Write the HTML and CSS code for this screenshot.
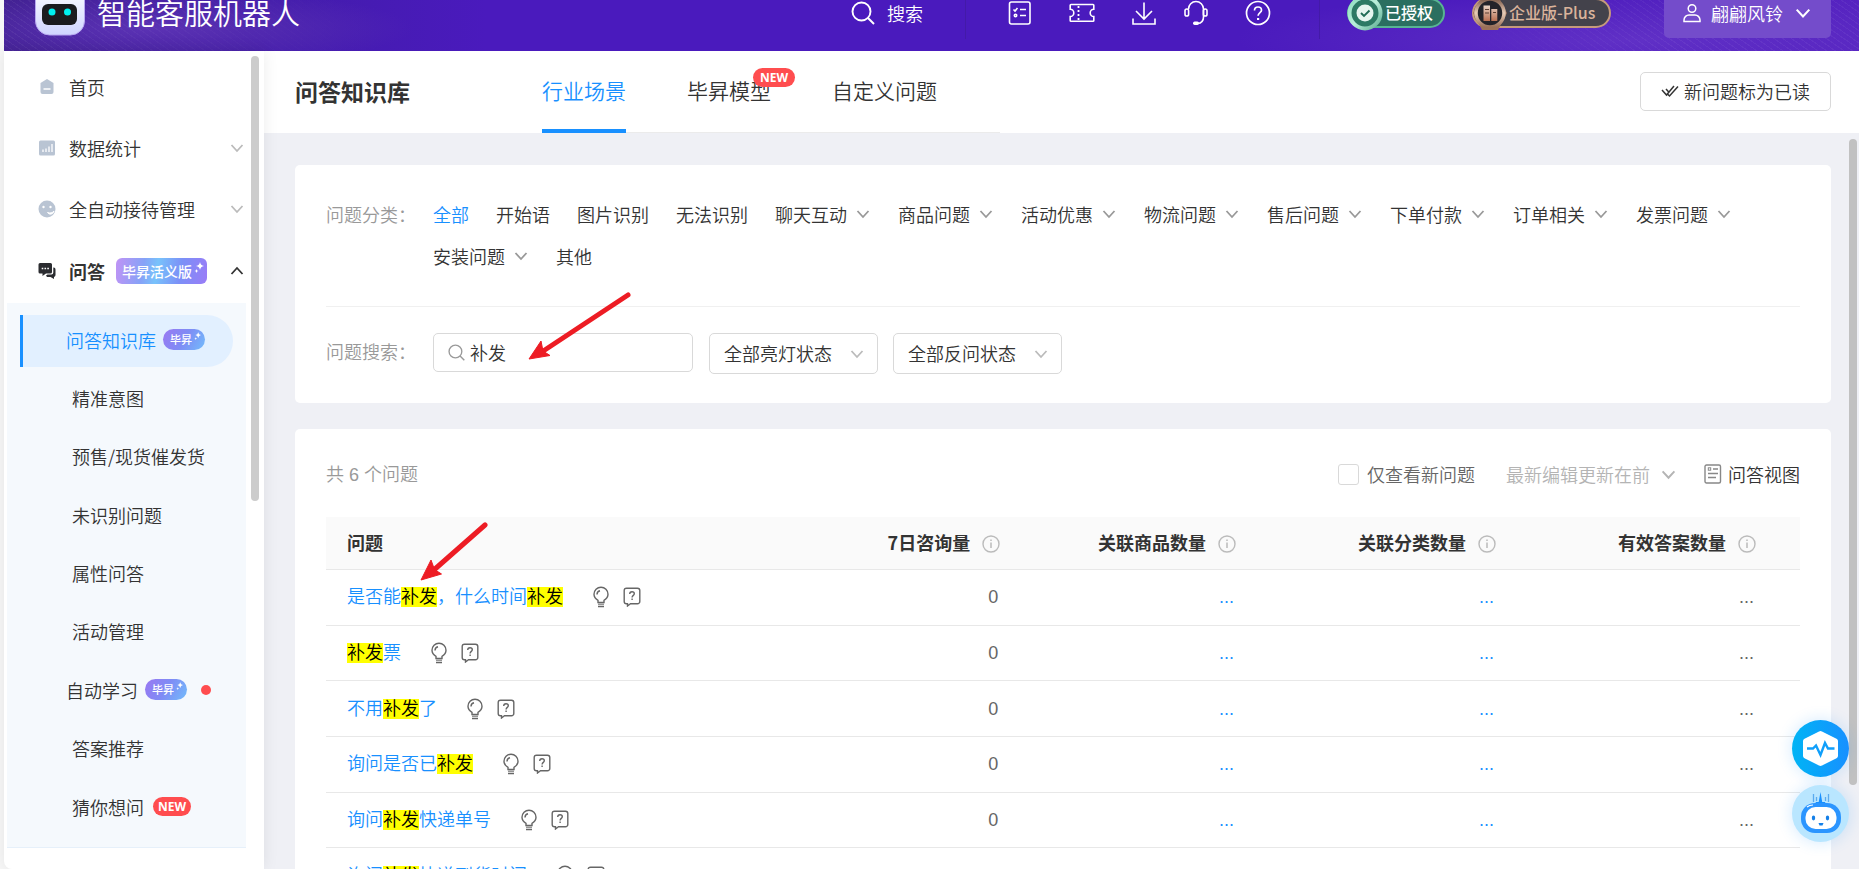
FILE: index.html
```html
<!DOCTYPE html>
<html lang="zh-CN">
<head>
<meta charset="utf-8">
<title>问答知识库</title>
<link rel="stylesheet" href="styles.css">
</head>
<body>
<svg class="defs" aria-hidden="true">
  <defs>
    <linearGradient id="g-logo" x1="0" y1="0" x2="0" y2="1"><stop offset="0" stop-color="#fff"/><stop offset="1" stop-color="#cfd4ff"/></linearGradient>
    <linearGradient id="g-ring" x1="0" y1="0" x2="1" y2="1"><stop offset="0" stop-color="#8fdcc0"/><stop offset=".5" stop-color="#b9efda"/><stop offset="1" stop-color="#5fae93"/></linearGradient>
    <linearGradient id="g-bronze" x1="0" y1="0" x2="0" y2="1"><stop offset="0" stop-color="#7d5a48"/><stop offset=".5" stop-color="#e8cdb8"/><stop offset="1" stop-color="#9a7058"/></linearGradient>
    <linearGradient id="g-build" x1="0" y1="0" x2="0" y2="1"><stop offset="0" stop-color="#e9d3c4"/><stop offset="1" stop-color="#b86f52"/></linearGradient>
    <symbol id="i-down" viewBox="0 0 14 14"><path d="M1.500 4l5.500 6 5.500-6" fill="none" stroke="currentColor" stroke-width="1.800"/></symbol>
    <symbol id="i-info" viewBox="0 0 18 18"><circle cx="9" cy="9" r="8" fill="none" stroke="currentColor" stroke-width="1.400"/><path d="M9 7.500v5.500M9 4.500v1.600" stroke="currentColor" stroke-width="1.500"/></symbol>
    <symbol id="i-bulb" viewBox="0 0 18 22"><path d="M6 16.500v-2.200C3.600 12.800 2 10.700 2 8.200a7 7 0 0 1 14 0c0 2.500-1.600 4.600-4 6.100v2.200zM5 8.500c0-2 1-3.300 3-3.800M6 20.500h6" fill="none" stroke="currentColor" stroke-width="1.400"/><path d="M6 18.200h6" stroke="currentColor" stroke-width="1"/></symbol>
    <symbol id="i-ask" viewBox="0 0 18 20"><path d="M3.500 1.200h11A2.300 2.300 0 0 1 16.800 3.500v11a2.300 2.300 0 0 1-2.300 2.300H7.500L4.500 19v-2.200h-1A2.300 2.300 0 0 1 1.200 14.500v-11A2.300 2.300 0 0 1 3.500 1.200z" fill="none" stroke="currentColor" stroke-width="1.400"/><path d="M6.700 7c0-1.500 1-2.300 2.300-2.300s2.300.8 2.300 2.100c0 1.500-2.200 1.700-2.200 3.700M9.100 11.600v1.500" fill="none" stroke="currentColor" stroke-width="1.400"/></symbol>
    <symbol id="i-find" viewBox="0 0 24 24"><circle cx="10.500" cy="10.500" r="9" fill="none" stroke="currentColor" stroke-width="1.900"/><path d="M17 17l6 6" stroke="currentColor" stroke-width="2"/></symbol>
    <symbol id="i-spark" viewBox="0 0 10 12"><path d="M6 0q.5 3.500 4 4-3.500.5-4 4-.5-3.500-4-4 3.500-.5 4-4zM2.500 7q.2 1.800 2 2-1.800.2-2 2-.2-1.800-2-2 1.800-.2 2-2z" fill="#fff"/></symbol>
  </defs>
</svg>

<div class="app">
<header class="topbar">
  <div class="brand">
    <svg width="50" height="50" viewBox="0 0 50 50" aria-hidden="true"><rect x=".5" y="-2" width="49" height="49" rx="14" fill="url(#g-logo)" stroke="#b8a8f0"/><rect x="7" y="16" width="35" height="21" rx="6" fill="#1b1b1f"/><circle cx="17" cy="24" r="3.500" fill="#00f0f0"/><circle cx="32.500" cy="24" r="3.500" fill="#00f0f0"/></svg>
    <span class="brand-name">智能客服机器人</span>
  </div>
  <div class="top-tools">
    <button class="top-search"><svg width="24" height="24" aria-hidden="true"><use href="#i-find"/></svg>搜索</button>
    <span class="top-line"></span>
    <div class="top-icons">
      <button aria-label="任务"><svg width="26" height="26" viewBox="0 0 26 26"><g fill="none" stroke="#fff" stroke-width="1.600"><rect x="2.500" y="2" width="20.500" height="22" rx="2"/><path d="M6.500 9.500l1.500 1.500 2.500-3M13 9.500h6M13 15.500h6"/><circle cx="8.500" cy="15.500" r="1.200"/></g></svg></button>
      <button aria-label="卡券"><svg width="26" height="26" viewBox="0 0 26 26"><path d="M2 4.500h22q.8 0 .8.800v4a3.600 3.600 0 0 0 0 7.200v4q0 .8-.8.800H2q-.8 0-.8-.8v-4a3.600 3.600 0 0 0 0-7.200v-4q0-.8.800-.8z" fill="none" stroke="#fff" stroke-width="1.600"/><path d="M9.500 6v14" stroke="#fff" stroke-width="1.800" stroke-dasharray="2 2"/></svg></button>
      <button aria-label="下载"><svg width="26" height="26" viewBox="0 0 26 26"><path d="M13 2.500v16M5 11l8 8 8-8M2 18.500v5.500h22v-5.500" fill="none" stroke="#fff" stroke-width="1.600"/></svg></button>
      <button class="tight" aria-label="客服"><svg width="26" height="26" viewBox="0 0 26 26"><g fill="none" stroke="#fff" stroke-width="1.600"><path d="M5.500 9a7.500 7.500 0 0 1 15 0v8q0 6-6 6.500"/><rect x="2" y="9" width="3.600" height="7" rx="1.800"/><rect x="20.400" y="9" width="3.600" height="7" rx="1.800"/></g><rect x="10" y="21.500" width="6" height="3.500" rx="1.700" fill="#fff"/></svg></button>
      <button aria-label="帮助"><svg width="26" height="26" viewBox="0 0 26 26"><circle cx="13" cy="13" r="11.500" fill="none" stroke="#fff" stroke-width="1.700"/><path d="M9.500 10.500c0-2.300 1.500-3.500 3.500-3.500s3.500 1.200 3.500 3.200c0 2.300-3.400 2.600-3.400 5.600" fill="none" stroke="#fff" stroke-width="1.700"/><path d="M12 18h2.200v2H12z" fill="#fff"/></svg></button>
    </div>
    <span class="top-line"></span>
    <div class="medal medal-green">
      <svg width="36" height="36" viewBox="0 0 36 36" aria-hidden="true"><circle cx="18" cy="18" r="15.500" fill="#2d7a64" stroke="url(#g-ring)" stroke-width="4"/><circle cx="18" cy="18" r="8.500" fill="#e6f5ef"/><path d="M14 18l3 3 5.500-5.500" fill="none" stroke="#1f6b55" stroke-width="1.900"/></svg>
      <span>已授权</span>
    </div>
    <div class="medal medal-bronze">
      <svg width="36" height="36" viewBox="0 0 36 36" aria-hidden="true"><path d="M10 1h16l9 17-9 17H10L1 18z" fill="#9b705a"/><circle cx="18" cy="18" r="14" fill="#242329" stroke="url(#g-bronze)" stroke-width="3.500"/><path d="M11.500 10.500h6.500V26h-6.500zM19.300 14h6V26h-6z" fill="url(#g-build)"/><path d="M13 14.500h4M13 18h4M21 17.500h3" stroke="#5c4034"/></svg>
      <span>企业版-Plus</span>
    </div>
    <button class="user"><svg width="20" height="20" viewBox="0 0 20 20" aria-hidden="true"><g fill="none" stroke="#fff" stroke-width="1.500"><circle cx="10" cy="5.500" r="3.800"/><path d="M2 18.500v-1.500c0-3 2.500-5 5-5h6c2.500 0 5 2 5 5v1.500z"/></g></svg>翩翩风铃<svg class="user-caret" width="16" height="16" aria-hidden="true"><use href="#i-down"/></svg></button>
  </div>
</header>

<div class="body">
<aside class="sidebar">
  <nav>
    <ul class="menu">
      <li><a class="menu-item" href="#"><svg width="18" height="18" viewBox="0 0 18 18"><path d="M9 1l6.500 4V14a2 2 0 0 1-2 2h-9a2 2 0 0 1-2-2V5z" fill="#b9c4d3"/><path d="M5.500 11h7" stroke="#fff" stroke-width="1.500"/></svg>首页</a></li>
      <li><a class="menu-item" href="#"><svg width="18" height="18" viewBox="0 0 18 18"><rect x="1" y="1.500" width="16" height="15" rx="1.500" fill="#b9c4d3"/><path d="M5 13v-2.500M8 13V9.500M11 13V7.500M14 13V5" stroke="#fff" stroke-width="1.300"/></svg>数据统计<svg class="caret" width="14" height="14"><use href="#i-down"/></svg></a></li>
      <li><a class="menu-item" href="#"><svg width="18" height="18" viewBox="0 0 18 18"><circle cx="9" cy="9" r="8.500" fill="#b9c4d3"/><circle cx="5.500" cy="7" r="1.200" fill="#fff"/><circle cx="12.500" cy="7" r="1.200" fill="#fff"/><path d="M9.500 12.500c2.500 1 5 .5 6.500-1.500-.5 3-4.500 4.500-6.500 1.500z" fill="#fff" stroke="#fff"/></svg>全自动接待管理<svg class="caret" width="14" height="14"><use href="#i-down"/></svg></a></li>
      <li><a class="menu-item current" href="#"><svg width="18" height="18" viewBox="0 0 18 18"><path d="M2 1h10.500a1.500 1.500 0 0 1 1.500 1.500V10a1.500 1.500 0 0 1-1.500 1.500H8L4.500 14v-2.500H2A1.500 1.500 0 0 1 .5 10V2.500A1.500 1.500 0 0 1 2 1z" fill="#2b2c30"/><path d="M15.300 5.500a2 2 0 0 1 2.200 2v5.500a2 2 0 0 1-1.500 1.900V17l-3.500-2H9l-1-1.500 1.500-1h4a2 2 0 0 0 1.800-2z" fill="#2b2c30"/><path d="M3.700 6.500h1.600M6.500 6.500h1.600M9.300 6.500h1.600" stroke="#fff" stroke-width="1.600"/></svg>问答<span class="pill pill-wide">毕昇活义版<svg width="10" height="12"><use href="#i-spark"/></svg></span><svg class="caret up" width="14" height="14"><use href="#i-down"/></svg></a>
        <ul class="submenu">
          <li><a class="sub tagged active" href="#">问答知识库<span class="pill">毕昇<svg width="7" height="9"><use href="#i-spark"/></svg></span></a></li>
          <li><a class="sub" href="#">精准意图</a></li>
          <li><a class="sub" href="#">预售/现货催发货</a></li>
          <li><a class="sub" href="#">未识别问题</a></li>
          <li><a class="sub" href="#">属性问答</a></li>
          <li><a class="sub" href="#">活动管理</a></li>
          <li><a class="sub tagged" href="#">自动学习<span class="pill">毕昇<svg width="7" height="9"><use href="#i-spark"/></svg></span><span class="dot"></span></a></li>
          <li><a class="sub" href="#">答案推荐</a></li>
          <li><a class="sub" href="#">猜你想问<span class="new">NEW</span></a></li>
        </ul>
      </li>
    </ul>
  </nav>
  <span class="thumb"></span>
</aside>

<main class="main">
  <div class="page-head">
    <h1>问答知识库</h1>
    <nav class="tabs">
      <a class="tab on" href="#">行业场景</a>
      <a class="tab" href="#">毕昇模型<span class="new new-tab">NEW</span></a>
      <a class="tab" href="#">自定义问题</a>
    </nav>
    <button class="read-btn"><svg width="18" height="14" viewBox="0 0 18 14" aria-hidden="true"><path d="M1 6l4.500 5L13 2M6.500 10l2 2L17 2.500M5 5l2.500 2.800" fill="none" stroke="#333" stroke-width="1.500"/></svg>新问题标为已读</button>
  </div>

  <div class="content">
    <section class="card filters">
      <div class="filter-row">
        <span class="label">问题分类：</span>
        <div class="cats">
          <a class="cat on" href="#">全部</a>
          <a class="cat" href="#">开始语</a>
          <a class="cat" href="#">图片识别</a>
          <a class="cat" href="#">无法识别</a>
          <a class="cat" href="#">聊天互动<svg width="16" height="14"><use href="#i-down"/></svg></a>
          <a class="cat" href="#">商品问题<svg width="16" height="14"><use href="#i-down"/></svg></a>
          <a class="cat" href="#">活动优惠<svg width="16" height="14"><use href="#i-down"/></svg></a>
          <a class="cat" href="#">物流问题<svg width="16" height="14"><use href="#i-down"/></svg></a>
          <a class="cat" href="#">售后问题<svg width="16" height="14"><use href="#i-down"/></svg></a>
          <a class="cat" href="#">下单付款<svg width="16" height="14"><use href="#i-down"/></svg></a>
          <a class="cat" href="#">订单相关<svg width="16" height="14"><use href="#i-down"/></svg></a>
          <a class="cat" href="#">发票问题<svg width="16" height="14"><use href="#i-down"/></svg></a>
          <a class="cat" href="#">安装问题<svg width="16" height="14"><use href="#i-down"/></svg></a>
          <a class="cat" href="#">其他</a>
        </div>
      </div>
      <div class="search-row">
        <label class="label" for="q">问题搜索：</label>
        <div class="search-box"><svg width="17" height="17" aria-hidden="true"><use href="#i-find"/></svg><input id="q" type="text" value="补发"></div>
        <div class="pick"><select aria-label="亮灯状态"><option>全部亮灯状态</option></select><svg width="14" height="14"><use href="#i-down"/></svg></div>
        <div class="pick"><select aria-label="反问状态"><option>全部反问状态</option></select><svg width="14" height="14"><use href="#i-down"/></svg></div>
      </div>
    </section>

    <section class="card results">
      <div class="toolbar">
        <span class="count">共 6 个问题</span>
        <label class="only-new"><input type="checkbox">仅查看新问题</label>
        <button class="sort">最新编辑更新在前<svg width="15" height="15"><use href="#i-down"/></svg></button>
        <button class="view"><svg width="18" height="20" viewBox="0 0 18 20" aria-hidden="true"><g fill="none" stroke="#888" stroke-width="1.400"><rect x="1" y="1" width="15.500" height="18" rx="1.500"/><path d="M9 5h5M4 9.500h10M4 13.500h8"/><rect x="4.300" y="3.800" width="2.400" height="2.400" stroke-width="1"/></g></svg>问答视图</button>
      </div>
      <table class="grid">
        <colgroup><col><col class="c-num"><col class="c-goods"><col class="c-type"><col class="c-ans"></colgroup>
        <thead><tr>
          <th>问题</th>
          <th>7日咨询量<svg width="18" height="18"><use href="#i-info"/></svg></th>
          <th>关联商品数量<svg width="18" height="18"><use href="#i-info"/></svg></th>
          <th>关联分类数量<svg width="18" height="18"><use href="#i-info"/></svg></th>
          <th>有效答案数量<svg width="18" height="18"><use href="#i-info"/></svg></th>
        </tr></thead>
        <tbody>
          <tr><td><div class="q"><a href="#">是否能<mark>补发</mark>，什么时间<mark>补发</mark></a><svg width="18" height="22"><use href="#i-bulb"/></svg><svg width="18" height="20"><use href="#i-ask"/></svg></div></td><td>0</td><td><a href="#">...</a></td><td><a href="#">...</a></td><td>...</td></tr>
          <tr><td><div class="q"><a href="#"><mark>补发</mark>票</a><svg width="18" height="22"><use href="#i-bulb"/></svg><svg width="18" height="20"><use href="#i-ask"/></svg></div></td><td>0</td><td><a href="#">...</a></td><td><a href="#">...</a></td><td>...</td></tr>
          <tr><td><div class="q"><a href="#">不用<mark>补发</mark>了</a><svg width="18" height="22"><use href="#i-bulb"/></svg><svg width="18" height="20"><use href="#i-ask"/></svg></div></td><td>0</td><td><a href="#">...</a></td><td><a href="#">...</a></td><td>...</td></tr>
          <tr><td><div class="q"><a href="#">询问是否已<mark>补发</mark></a><svg width="18" height="22"><use href="#i-bulb"/></svg><svg width="18" height="20"><use href="#i-ask"/></svg></div></td><td>0</td><td><a href="#">...</a></td><td><a href="#">...</a></td><td>...</td></tr>
          <tr><td><div class="q"><a href="#">询问<mark>补发</mark>快递单号</a><svg width="18" height="22"><use href="#i-bulb"/></svg><svg width="18" height="20"><use href="#i-ask"/></svg></div></td><td>0</td><td><a href="#">...</a></td><td><a href="#">...</a></td><td>...</td></tr>
          <tr><td><div class="q"><a href="#">询问<mark>补发</mark>快递到货时间</a><svg width="18" height="22"><use href="#i-bulb"/></svg><svg width="18" height="20"><use href="#i-ask"/></svg></div></td><td>0</td><td><a href="#">...</a></td><td><a href="#">...</a></td><td>...</td></tr>
        </tbody>
      </table>
    </section>
  </div>
  <span class="thumb thumb-main"></span>
</main>
</div>
</div>

<div class="floats">
  <button class="float pulse" aria-label="诊断"><svg width="57" height="57" viewBox="0 0 57 57"><path d="M27 11.500q1.500-.8 3 0l14.500 7.200q1.500.8 1.500 2.300v15q0 1.500-1.500 2.300L30 45.500q-1.500.8-3 0l-14.500-7.200q-1.500-.8-1.500-2.300V21q0-1.500 1.500-2.300z" fill="#fff"/><path d="M15 28.500h6l3-3 4.500 9.500 4.500-12 3 5.500h6.500" fill="none" stroke="#0f9ffb" stroke-width="2.400"/></svg></button>
  <button class="float robot" aria-label="助手"><svg width="57" height="57" viewBox="0 0 57 57"><path d="M21.500 9v8M36.500 9v8M24.500 12v4M33.500 12v4" stroke="#5aabef" stroke-width="1.300"/><path d="M28.500 7l1.700 10h3v2h-9.500v-2h3z" fill="#1890ff"/><rect x="9" y="18" width="40" height="30" rx="14" fill="#2b95ff"/><rect x="13.500" y="22" width="31" height="22" rx="10" fill="#fff"/><path d="M15 22q2.500-2 6-2" fill="none" stroke="#fff" stroke-width="1.200"/><ellipse cx="21.500" cy="33" rx="1.700" ry="2.400" fill="#1580e8"/><ellipse cx="35.500" cy="33" rx="1.700" ry="2.400" fill="#1580e8"/><path d="M26.500 38h5l-1 2.500h-3z" fill="#1580e8"/></svg></button>
</div>

<svg class="marks" width="660" height="600" viewBox="0 0 660 600" aria-hidden="true">
  <g stroke="#ed1c24" stroke-width="5" stroke-linecap="round"><path d="M628 295l-84 55.500M485 525l-50 44"/></g>
  <path d="M529 359l12-18 2 10 7 4.500zM421 580l10-20 3.500 9.500 7 4.500z" fill="#ed1c24" stroke="#ed1c24"/>
</svg>
</body>
</html>
```
FILE: styles.css
```css
* { box-sizing: border-box; }
body {
  margin: 0;
  height: 100vh;
  overflow: hidden;
  background: #f7f7f7;
  color: #333;
  font: 350 18px/26px "Noto Sans CJK SC", sans-serif;
}
a { color: inherit; text-decoration: none; }
ul { list-style: none; margin: 0; padding: 0; }
button, input, select { font: inherit; color: inherit; }
button { display: flex; align-items: center; padding: 0; border: 0; background: none; white-space: nowrap; }
svg { display: block; flex: none; }
.defs { position: absolute; width: 0; height: 0; }

.app { display: flex; flex-direction: column; height: 100vh; padding-left: 4px; }

/* top bar, scrolled partly out of view */
.topbar {
  position: relative;
  flex: none;
  display: flex;
  align-items: center;
  justify-content: space-between;
  height: 75px;
  margin-top: -24px;
  padding: 0 28px 1px 31px;
  color: #fff;
  background:
    radial-gradient(ellipse 260px 40px at 8% 70%, #5b32b4 0%, transparent 100%),
    radial-gradient(ellipse 400px 50px at 88% 85%, #6030c6 0%, transparent 100%),
    linear-gradient(90deg, #40208f 0%, #431cab 15%, #4a1abd 26%, #4a1abd 80%, #5522c0 100%);
}
.topbar::before {
  content: "";
  position: absolute;
  inset: 0;
  background: repeating-linear-gradient(35deg, #ffffff0d 0 1px, transparent 1px 5px);
  -webkit-mask: linear-gradient(90deg, #000 0, transparent 20%, transparent 78%, #000 90%);
  mask: linear-gradient(90deg, #000 0, transparent 20%, transparent 78%, #000 90%);
}
.brand, .top-tools { position: relative; display: flex; align-items: center; }
.brand { gap: 12px; }
.brand-name { font-size: 29px; line-height: 36px; font-weight: 350; white-space: nowrap; padding-bottom: 2px; }
.top-search { gap: 12px; }
.top-line { width: 1px; height: 52px; background: #431aa8; margin-left: 42px; }
.top-icons { display: flex; gap: 36px; margin-left: 41px; }
.top-icons .tight { margin-left: -10px; }
.top-icons + .top-line { margin-left: 48px; }
.medal { display: flex; align-items: center; height: 30px; border-radius: 15px; line-height: 24px; white-space: nowrap; font-weight: 500; }
.medal svg { margin-left: -2px; }
.medal span { padding-bottom: 2px; }
.medal-green { margin-left: 27px; width: 98px; background: #2b6f60; border: 2px solid #58b493; font-size: 16px; }
.medal-green span { margin-left: 2px; }
.medal-bronze { margin-left: 27px; width: 139px; background: #43424b; border: 2px solid #c59a7c; color: #d9b39b; font-size: 16px; }
.medal-bronze span { margin-left: 1px; }
.user { height: 50px; width: 167px; margin-left: 53px; padding: 0 18px; gap: 9px; background: #744ccb; border-radius: 5px; }
.user-caret { margin-left: 3px; }

.body { flex: 1; display: flex; min-height: 0; }

/* sidebar */
.sidebar { position: relative; z-index: 1; flex: none; width: 260px; background: #fff; overflow: hidden; box-shadow: 0 0 16px #00000014; border-bottom-left-radius: 8px; }
.menu { padding: 5px 18px 0 3px; }
.menu-item { display: flex; align-items: center; height: 61px; padding: 0 2px 0 31px; white-space: nowrap; }
.menu-item > svg:first-child { margin-right: 13px; }
.caret { margin-left: auto; color: #bbb; }
.caret.up { transform: rotate(180deg); color: #333; }
.current { font-weight: 700; height: 64px; }
.pill {
  display: inline-flex;
  align-items: center;
  height: 21px;
  margin-left: 7px;
  padding: 0 4px 1px 7px;
  gap: 2px;
  border-radius: 11px;
  background: linear-gradient(120deg, #9a78f2, #7f8cf5 50%, #72bcfb);
  color: #fff;
  font-size: 11px;
  font-weight: 500;
  line-height: 20px;
}
.pill svg { margin-bottom: 6px; }
.pill-wide { height: 26px; margin-left: 11px; padding: 0 3px 1px 6px; border-radius: 6px; font-size: 14px; background: linear-gradient(100deg, #c093f5, #86a2f7 30%, #78c2fb 45%, #7b90f7 70%, #9a7cf7); }
.submenu { display: flex; flex-direction: column; justify-content: space-between; height: 545px; padding: 12px 0 13px; background: #f5f9fd; border-bottom: 1px solid #e6f0fa; }
.sub { display: flex; align-items: center; height: 52px; margin: 0 13px; padding: 0 0 3px 52px; white-space: nowrap; }
.sub.tagged { padding-left: 46px; }
.sub.active { padding-left: 43px; background: #e2f0ff; border-left: 3px solid #1890ff; border-radius: 0 26px 26px 0; color: #1890ff; }
.dot { width: 10px; height: 10px; margin-left: 14px; border-radius: 50%; background: #ff4d4f; }
.new { display: inline-block; height: 19px; margin-left: 9px; padding: 0 5px; border-radius: 10px; background: #ff4d4f; color: #fff; font: 700 12px/19px "Open Sans", sans-serif; }
.thumb { position: absolute; top: 5px; right: 5px; width: 8px; height: 445px; border-radius: 4px; background: #ccc; }

/* main area */
.main { position: relative; flex: 1; min-width: 0; display: flex; flex-direction: column; background: #eff0f5; }
.page-head { flex: none; display: flex; align-items: center; height: 82px; padding: 0 28px 0 31px; background: #fff; }
h1 { margin: 0; padding-bottom: 2px; font-size: 23px; line-height: 32px; white-space: nowrap; }
.tabs { display: flex; align-self: stretch; gap: 61px; width: 458px; margin-left: 132px; border-bottom: 1px solid #ebebeb; }
.tab { position: relative; display: flex; align-items: center; height: 82px; font-size: 21px; white-space: nowrap; border-bottom: 4px solid transparent; }
.tab.on { color: #1890ff; border-color: #1890ff; }
.new-tab { position: absolute; top: 17px; right: -24px; padding: 0 7px; }
.read-btn { height: 39px; margin-left: auto; padding: 0 20px 1px; gap: 5px; border: 1px solid #d9d9d9; border-radius: 5px; background: #fff; }
.page-head .read-btn { margin-bottom: 2px; }
.thumb-main { top: 88px; right: 2px; height: 646px; background: #c1c1c1; }

.content { flex: 1; min-height: 0; overflow: hidden; padding: 32px 28px 0 31px; display: flex; flex-direction: column; gap: 26px; }
.card { flex: none; background: #fff; border-radius: 5px; padding: 0 31px; }
.filters { height: 238px; }
.filter-row { display: flex; padding: 28px 0; border-bottom: 1px solid #f0f0f0; height: 142px; }
.label { flex: none; width: 107px; color: #999; line-height: 42px; }
.cats { display: flex; flex-wrap: wrap; column-gap: 27px; align-content: flex-start; }
.cat { display: flex; align-items: center; gap: 8px; height: 42px; white-space: nowrap; }
.cat svg { color: #999; }
.cat.on { color: #1890ff; }
.search-row { display: flex; align-items: flex-start; padding-top: 26px; }
.search-row .label { line-height: 36px; }
.search-box { display: flex; align-items: center; gap: 3px; width: 260px; height: 39px; padding: 0 14px 1px; margin-right: 16px; border: 1px solid #d9d9d9; border-radius: 5px; color: #999; }
.search-box input { flex: 1; min-width: 0; border: 0; outline: 0; padding: 0 2px; color: #333; background: none; }
.pick { position: relative; margin-right: 15px; }
.pick select { appearance: none; width: 169px; height: 41px; padding: 0 14px 2px; border: 1px solid #d9d9d9; border-radius: 5px; background: #fff; color: #333; }
.pick svg { position: absolute; right: 14px; top: 14px; color: #bbb; pointer-events: none; }

.toolbar { display: flex; align-items: center; height: 88px; padding-top: 2px; }
.count { padding-top: 2px; color: #999; font-family: "Liberation Sans", "Noto Sans CJK SC", sans-serif; }
.only-new { display: flex; align-items: center; gap: 8px; margin-left: auto; color: #666; }
.only-new input { appearance: none; width: 21px; height: 21px; margin: 0; border: 1px solid #d9d9d9; border-radius: 3px; background: #fff; }
.sort { gap: 11px; margin-left: 31px; color: #b4b4b4; }
.view { gap: 6px; margin-left: 28px; }

.grid { width: 100%; border-collapse: separate; border-spacing: 0; table-layout: fixed; height: 387px; }
.c-num { width: 12%; }
.c-goods { width: 16%; }
.c-type { width: 260px; }
.c-ans { width: 283px; }
th { height: 53px; padding: 0 21px 2px; background: #fafafa; border-bottom: 1px solid #e8e8e8; text-align: right; font-weight: 700; white-space: nowrap; }
th:first-child, td:first-child { text-align: left; }
th:last-child { padding-right: 44px; }
th svg { display: inline-block; margin-left: 12px; vertical-align: -3px; color: #bbb; }
td { padding: 0 23px 0 21px; border-bottom: 1px solid #e8e8e8; text-align: right; color: #666; font-family: "Liberation Sans", "Noto Sans CJK SC", sans-serif; }
td:last-child { padding-right: 46px; }
td a { color: #1890ff; }
.q { display: flex; align-items: center; white-space: nowrap; color: #666; }
.q svg:nth-of-type(1) { margin-left: 29px; }
.q svg:nth-of-type(2) { margin-left: 13px; }
mark { display: inline-block; line-height: 20px; background: #ff0; color: #000; }

/* floating helpers */
.floats { position: fixed; z-index: 3; right: 10px; bottom: 27px; display: grid; gap: 8px; }
.float { width: 57px; height: 57px; border-radius: 50%; box-shadow: 0 0 16px #1890ff33; }
.pulse { background: linear-gradient(90deg, #00b4f5, #1890ff); }
.robot { background: #b9e6ff; }
.marks { position: absolute; z-index: 4; top: 0; left: 0; pointer-events: none; }
```
